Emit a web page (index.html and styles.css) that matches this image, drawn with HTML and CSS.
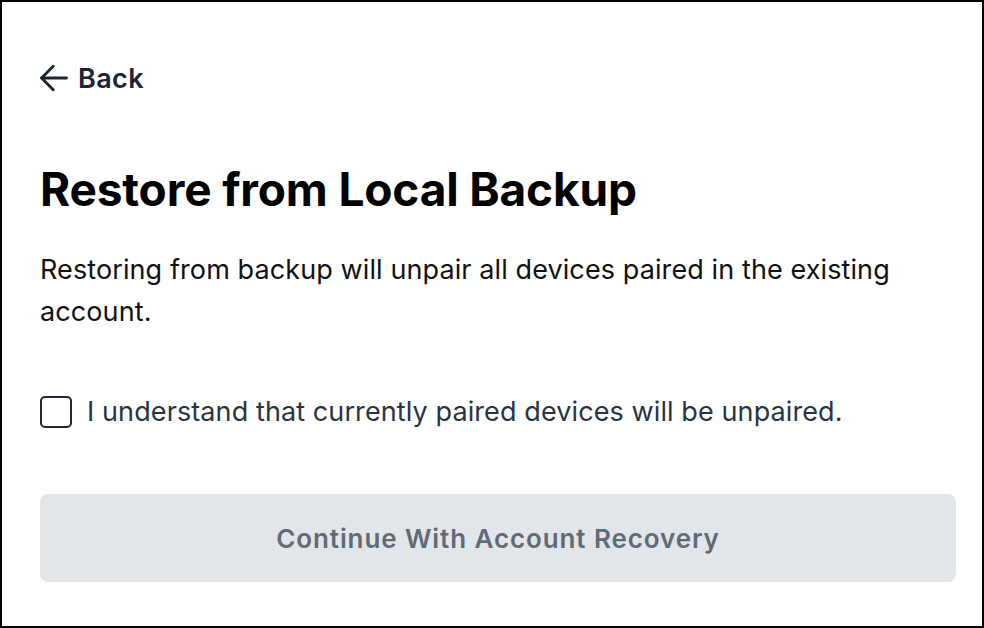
FILE: index.html
```html
<!DOCTYPE html>
<html>
<head>
<meta charset="utf-8">
<link rel="stylesheet" href="styles.css">
</head>
<body>
<div class="frame">
  <div class="content">
    <a class="back" href="#">
      <svg class="back-icon" width="28" height="28" viewBox="0 0 28 28" fill="none" stroke="currentColor" stroke-width="2.8" stroke-linecap="round" stroke-linejoin="round"><path d="M26.5 14H1.6"/><path d="M13.2 2.3L1.6 14l11.6 11.7"/></svg>
      <span>Back</span>
    </a>
    <h1 class="title">Restore from Local Backup</h1>
    <p class="desc">Restoring from backup will unpair all devices paired in the existing account.</p>
    <label class="check">
      <span class="box"></span>
      <span class="check-text">I understand that currently paired devices will be unpaired.</span>
    </label>
    <button class="btn" disabled>Continue With Account Recovery</button>
  </div>
</div>
</body>
</html>
```
FILE: styles.css
```css
html, body {
  margin: 0;
  padding: 0;
  background: #fff;
}
body {
  font-family: Inter, "Noto Sans", sans-serif;
}
.frame {
  box-sizing: border-box;
  width: 984px;
  height: 628px;
  border: 2px solid #000;
  background: #fff;
}
.content {
  padding: 58px 26px 0 38px;
  display: flex;
  flex-direction: column;
}
.back {
  display: flex;
  align-items: center;
  gap: 10px;
  color: #1b2434;
  text-decoration: none;
  font-size: 27px;
  font-weight: 600;
  letter-spacing: 0.4px;
  height: 36px;
}
.back-icon {
  flex: none;
}
.title {
  margin: 65px 0 0 0;
  font-size: 46px;
  font-weight: 700;
  line-height: 56px;
  color: #000;
  letter-spacing: -0.15px;
}
.desc {
  margin: 32px 0 0 0;
  font-size: 27px;
  line-height: 42px;
  color: #111;
  letter-spacing: 0.1px;
  max-width: 900px;
}
.check {
  margin-top: 63px;
  display: flex;
  align-items: center;
  gap: 15px;
}
.box {
  box-sizing: border-box;
  width: 32px;
  height: 32px;
  border: 2.5px solid #1f2933;
  border-radius: 5px;
  flex: none;
}
.check-text {
  font-size: 27px;
  line-height: 32px;
  color: #2a3441;
  letter-spacing: 0.1px;
}
.btn {
  margin-top: 66px;
  height: 88px;
  border: none;
  border-radius: 8px;
  background: #e3e6e8;
  color: #5f6b76;
  font-family: Inter, "Noto Sans", sans-serif;
  font-size: 26px;
  font-weight: 600;
  letter-spacing: 0.9px;
}
```
